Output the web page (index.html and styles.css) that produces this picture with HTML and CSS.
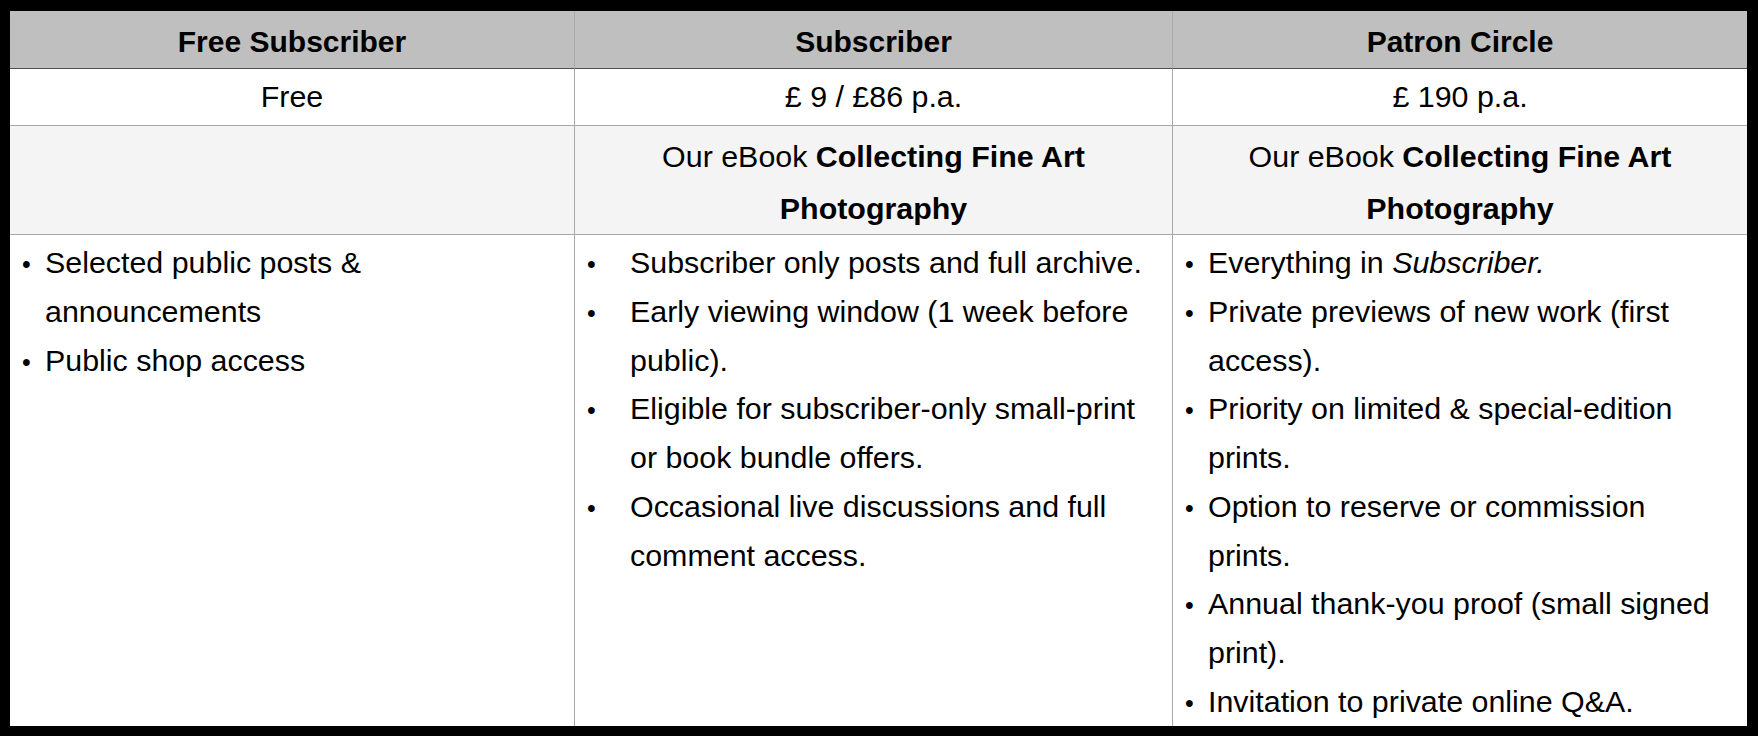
FILE: index.html
```html
<!DOCTYPE html>
<html lang="en">
<head>
<meta charset="utf-8">
<title>Membership tiers</title>
<link rel="stylesheet" href="styles.css">
</head>
<body>
<div class="pricing">
  <div class="cell head"><span>Free Subscriber</span></div>
  <div class="cell head"><span>Subscriber</span></div>
  <div class="cell head last"><span>Patron Circle</span></div>

  <div class="cell price"><span>Free</span></div>
  <div class="cell price"><span>£ 9 / £86 p.a.</span></div>
  <div class="cell price last"><span>£ 190 p.a.</span></div>

  <div class="cell bonus"></div>
  <div class="cell bonus"><p class="bonus-text">Our eBook <strong>Collecting Fine Art Photography</strong></p></div>
  <div class="cell bonus last"><p class="bonus-text">Our eBook <strong>Collecting Fine Art Photography</strong></p></div>

  <div class="cell perks">
    <ul class="list">
      <li><span>Selected public posts &amp; announcements</span></li>
      <li><span>Public shop access</span></li>
    </ul>
  </div>
  <div class="cell perks">
    <ul class="list list-wide">
      <li><span>Subscriber only posts and full archive.</span></li>
      <li><span>Early viewing window (1 week before public).</span></li>
      <li><span>Eligible for subscriber-only small-print or book bundle offers.</span></li>
      <li><span>Occasional live discussions and full comment access.</span></li>
    </ul>
  </div>
  <div class="cell perks last">
    <ul class="list">
      <li><span>Everything in <em>Subscriber.</em></span></li>
      <li><span>Private previews of new work (first access).</span></li>
      <li><span>Priority on limited &amp; special-edition prints.</span></li>
      <li><span>Option to reserve or commission prints.</span></li>
      <li><span>Annual thank-you proof (small signed print).</span></li>
      <li><span>Invitation to private online Q&amp;A.</span></li>
    </ul>
  </div>
</div>
</body>
</html>
```

FILE: styles.css
```css
html, body {
  margin: 0;
  height: 736px;
}

body {
  background: #000;
  padding: 11px 11px 10px 10px;
  box-sizing: border-box;
  font-family: "Liberation Sans", Arial, Helvetica, sans-serif;
  font-size: 30.4px;
  line-height: 48.75px;
  color: #000;
}

.pricing {
  display: grid;
  grid-template-columns: 565px 598px 1fr;
  grid-template-rows: 58px 57px 109px 1fr;
  height: 100%;
  background: #fff;
}

.cell {
  box-sizing: border-box;
  border-right: 1px solid #a8a8a8;
  border-bottom: 1px solid #a8a8a8;
}

.cell.last {
  border-right: none;
}

.head,
.price,
.bonus {
  display: flex;
  align-items: center;
  justify-content: center;
  text-align: center;
  padding: 0 16px;
}

.head {
  background: #bfbfbf;
  font-weight: bold;
  font-size: 30px;
  padding-top: 5px;
  border-bottom-color: #505050;
  border-right-color: #aaaaaa;
}

.price {
  background: #fff;
  padding-bottom: 2px;
}

.bonus {
  background: #f4f4f4;
  padding-top: 5px;
}

.bonus-text {
  margin: 0;
  line-height: 51.5px;
}

.perks {
  border-bottom: none;
  padding: 3px 20px 0 12px;
  background: #fff;
}

.list {
  margin: 0;
  padding: 0;
  list-style: none;
}

.list li {
  display: flex;
  align-items: baseline;
}

.list li::before {
  content: "•";
  flex: none;
  width: 23px;
  font-size: 0.82em;
  line-height: 1;
}

.list-wide li::before {
  width: 43px;
}
```
